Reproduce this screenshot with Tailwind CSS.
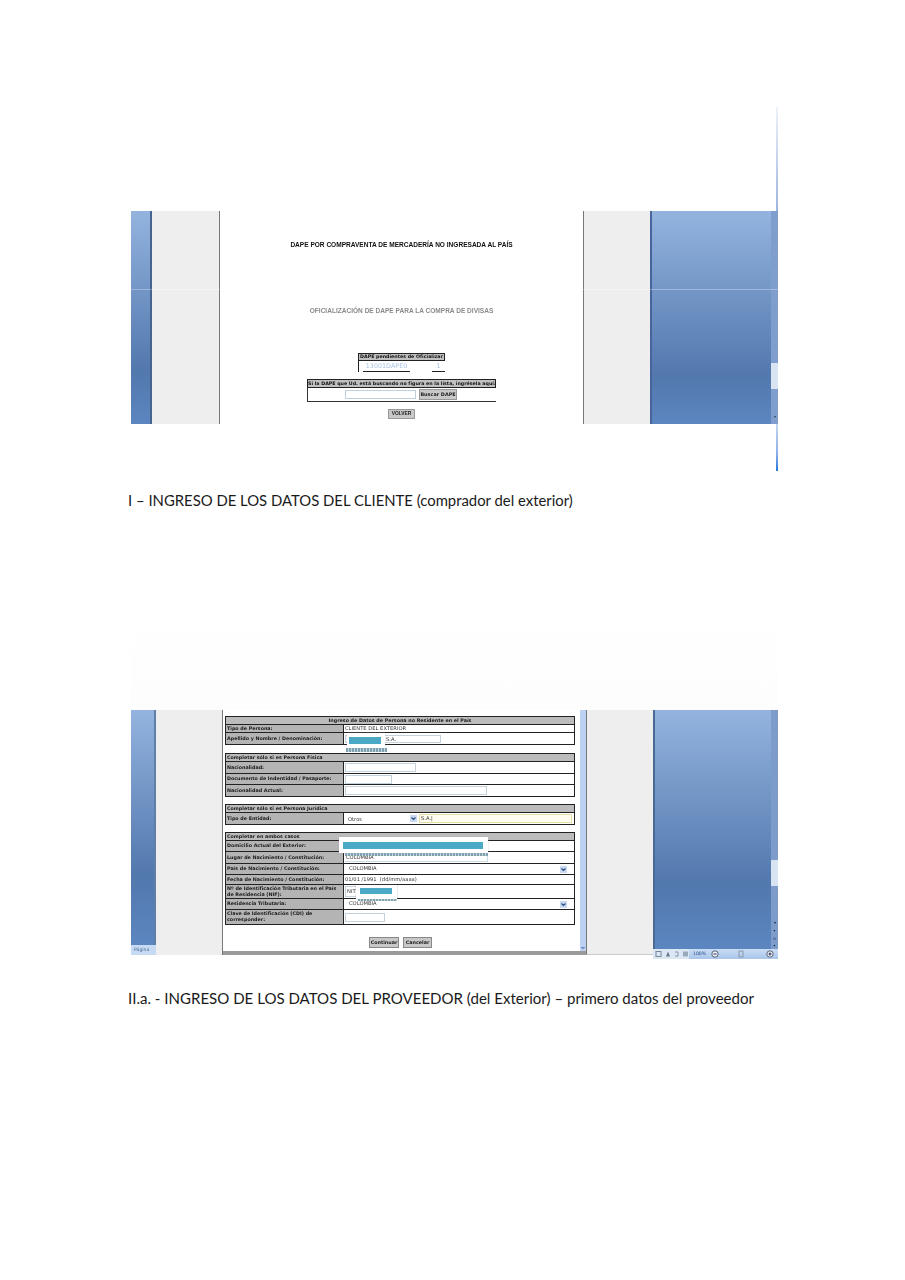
<!DOCTYPE html>
<html lang="es"><head><meta charset="utf-8"><title>DAPE</title>
<script src="https://cdn.jsdelivr.net/npm/@tailwindcss/browser@4"></script></head>
<body class="bg-white">
<main class="w-[905px] h-[1280px] overflow-hidden bg-white pt-[107px] font-['Lato',sans-serif]">

<!-- Screenshot 1 -->
<figure class="ml-[131px] w-[647px]">
  <div class="h-[104px] flex justify-end"><div class="w-[2px] bg-gradient-to-b from-[#eef2f9] to-[#9db4de]"></div></div>
  <div class="relative h-[213px] flex blur-[0.3px]">
    <div class="w-[21px] border-r-2 border-[#47648f] bg-gradient-to-b from-[#94b4df] via-[#5278ad] via-75% to-[#5c86c0]"></div>
    <div class="w-[68px] border-r border-[#777] bg-[#eeeeee]"></div>
    <div class="w-[364px] border-r border-[#777] bg-white flex flex-col items-center font-['Liberation_Sans',sans-serif]">
      <p class="mt-[30px] h-[8px] leading-[8px] text-[6.55px] font-bold text-[#111] whitespace-nowrap">DAPE POR COMPRAVENTA DE MERCADERÍA NO INGRESADA AL PAÍS</p>
      <p class="mt-[58px] h-[8px] leading-[8px] text-[6.55px] font-bold text-[#8a8a8a] whitespace-nowrap">OFICIALIZACIÓN DE DAPE PARA LA COMPRA DE DIVISAS</p>
      <div class="mt-[37.5px] w-[87px] font-['DejaVu_Sans',sans-serif]">
        <div class="h-[8.5px] border border-[#222] bg-[#c0c0c0] text-[4.75px] leading-[6.5px] font-bold text-center text-[#111] whitespace-nowrap">DAPE pendientes de Oficializar</div>
        <div class="h-[11px] flex justify-between border-l border-[#222] pl-[4px] text-[6.4px] leading-[10px] text-[#a9c3e2]">
          <span class="w-[47px] border-b border-[#222] text-center">13001DAPE0</span><span class="w-[13px] border-b border-[#222] text-center">1</span>
        </div>
      </div>
      <div class="mt-[7px] w-[189px] font-['DejaVu_Sans',sans-serif]">
        <div class="h-[9px] border border-[#222] bg-[#c0c0c0] text-[4.75px] leading-[7px] font-bold text-center text-[#111] whitespace-nowrap">Si la DAPE que Ud. está buscando no figura en la lista, ingrésela aquí:</div>
        <div class="h-[14px] border-l border-b border-[#333] flex items-center gap-[3px] pl-[37px]">
          <span class="w-[71px] h-[9px] border border-[#bcd0e0] bg-white"></span>
          <span class="w-[38px] h-[11px] border border-[#999] bg-[#c8c8c8] text-[4.9px] leading-[9px] font-bold text-center text-[#222] whitespace-nowrap">Buscar DAPE</span>
        </div>
      </div>
      <span class="mt-[7px] w-[27px] h-[10px] border border-[#999] bg-[#c8c8c8] text-[4.9px] leading-[8px] font-bold text-center text-[#222]">VOLVER</span>
    </div>
    <div class="w-[68px] bg-[#eeeeee] border-r-2 border-[#47649c]"></div>
    <div class="w-[119px] bg-gradient-to-b from-[#94b4df] via-[#5278ad] via-77% to-[#5c86c0]"></div>
    <div class="w-[7px] flex flex-col items-center bg-[#7f9ecd]">
      <div class="mt-[152px] w-full h-[26px] bg-[#d9e4f2]"></div>
      <span class="mt-[25px] text-[4px] leading-[6px] text-[#345]">▾</span>
    </div>
    <!-- horizontal seam of the scanned picture -->
    <div class="absolute left-0 right-0 top-[78px] h-px bg-white/30"></div>
  </div>
  <div class="h-[47px] flex justify-end"><div class="w-[2px] bg-gradient-to-b from-[#c4d5f0] via-[#8fb2ea] via-60% to-[#1c79d8]"></div></div>
</figure>

<figcaption class="ml-[128px] mt-[19px] h-[20px] leading-[20px] text-[14.87px] text-[#1a1a1a] whitespace-nowrap">I – INGRESO DE LOS DATOS DEL CLIENTE (comprador del exterior)</figcaption>

<!-- Screenshot 2 -->
<figure class="ml-[131px] mt-[94px] w-[647px]">
  <div class="h-[106px] bg-gradient-to-b from-white to-[#fdfdfd]"></div>
  <div class="h-[245px] flex blur-[0.3px]">
    <div class="w-[25px] flex flex-col">
      <div class="flex-1 border-r-2 border-[#5f7ea8] bg-gradient-to-b from-[#94b4df] via-[#5278ad] via-70% to-[#5c86c0]"></div>
      <div class="h-[10px] bg-[#c6daf3] text-[4.6px] leading-[10px] text-[#46688f] pl-[3px] font-['DejaVu_Sans',sans-serif]">Página</div>
    </div>
    <div class="w-[67px] border-r border-[#777] bg-[#eeeeee]"></div>
    <div class="w-[363px] relative bg-white flex flex-col border-b-[4px] border-[#9a9a9a]">
      <div class="relative ml-[2px] mt-[6px] w-[350px] text-[4.8px] font-bold text-[#1a1a1a] font-['DejaVu_Sans',sans-serif]">
        <!-- block 1 -->
        <div class="border border-[#222]">
          <div class="h-[8px] bg-[#bcbcbc] leading-[7px] text-center border-b border-[#222] whitespace-nowrap">Ingreso de Datos de Persona no Residente en el País</div>
          <div class="h-[8px] flex border-b border-[#222]"><span class="w-[118px] pl-[1px] bg-[#b4b4b4] border-r border-[#222] whitespace-nowrap flex items-center">Tipo de Persona:</span><span class="flex-1 pl-[1px] font-normal text-[#333] text-[5.2px] flex items-center">CLIENTE DEL EXTERIOR</span></div>
          <div class="h-[11px] flex"><span class="w-[118px] pl-[1px] bg-[#b4b4b4] border-r border-[#222] whitespace-nowrap flex items-center">Apellido y Nombre / Denominación:</span><span class="flex-1 flex items-center"><span class="ml-[1px] w-[96px] h-[8px] border border-[#c4d2dc] pl-[40px] leading-[6px] font-normal text-[5.2px] text-[#333]">S.A.</span></span></div>
        </div>
        <!-- block 2 -->
        <div class="mt-[8px] border border-[#222]">
          <div class="h-[8px] bg-[#bcbcbc] leading-[7px] pl-[1px] border-b border-[#222] whitespace-nowrap">Completar sólo si es Persona Física</div>
          <div class="h-[12px] flex border-b border-[#222]"><span class="w-[118px] pl-[1px] bg-[#b4b4b4] border-r border-[#222] flex items-center">Nacionalidad:</span><span class="flex-1 flex items-center"><span class="ml-[1px] w-[71px] h-[9px] border border-[#c4d2dc]"></span></span></div>
          <div class="h-[11px] flex border-b border-[#222]"><span class="w-[118px] pl-[1px] bg-[#b4b4b4] border-r border-[#222] whitespace-nowrap flex items-center">Documento de Indentidad / Pasaporte:</span><span class="flex-1 flex items-center"><span class="ml-[1px] w-[47px] h-[9px] border border-[#c4d2dc]"></span></span></div>
          <div class="h-[11px] flex"><span class="w-[118px] pl-[1px] bg-[#b4b4b4] border-r border-[#222] flex items-center">Nacionalidad Actual:</span><span class="flex-1 flex items-center"><span class="ml-[1px] w-[142px] h-[9px] border border-[#c4d2dc]"></span></span></div>
        </div>
        <!-- block 3 -->
        <div class="mt-[7px] border border-[#222]">
          <div class="h-[8px] bg-[#bcbcbc] leading-[7px] pl-[1px] border-b border-[#222] whitespace-nowrap">Completar sólo si es Persona Jurídica</div>
          <div class="h-[11px] flex"><span class="w-[118px] pl-[1px] bg-[#b4b4b4] border-r border-[#222] flex items-center">Tipo de Entidad:</span>
            <span class="flex-1 flex items-center pl-[3px] font-normal text-[5.2px] text-[#333] gap-[1px]">
              <span class="w-[70px] h-[8px] leading-[8px] pl-[1px] flex justify-between"><span>Otros</span><svg class="w-[7px] h-[7px] bg-[#c9d9ef]" viewBox="0 0 7 7"><path d="M1.5 2.5L3.5 4.5L5.5 2.5" fill="none" stroke="#2d4f86" stroke-width="1.2"/></svg></span>
              <span class="ml-[1px] w-[153px] h-[9px] border border-[#e6dfa8] bg-[#fffdf0] leading-[7px] pl-[1px]">S.A.|</span>
            </span>
          </div>
        </div>
        <!-- block 4 -->
        <div class="mt-[7px] border border-[#222]">
          <div class="h-[8px] bg-[#bcbcbc] leading-[7px] pl-[1px] border-b border-[#222] whitespace-nowrap">Completar en ambos casos</div>
          <div class="h-[11px] flex border-b border-[#222]"><span class="w-[118px] pl-[1px] bg-[#b4b4b4] border-r border-[#222] whitespace-nowrap flex items-center">Domicilio Actual del Exterior:</span><span class="flex-1"></span></div>
          <div class="h-[12px] flex border-b border-[#222]"><span class="w-[118px] pl-[1px] bg-[#b4b4b4] border-r border-[#222] whitespace-nowrap flex items-center">Lugar de Nacimiento / Constitución:</span><span class="flex-1 pl-[2px] font-normal text-[5.2px] text-[#333] flex items-center">COLOMBIA</span></div>
          <div class="h-[11px] flex border-b border-[#222]"><span class="w-[118px] pl-[1px] bg-[#b4b4b4] border-r border-[#222] whitespace-nowrap flex items-center">País de Nacimiento / Constitución:</span><span class="flex-1 flex items-center pl-[5px] pr-[7px] justify-between font-normal text-[5.2px] text-[#333]"><span>COLOMBIA</span><svg class="w-[7px] h-[7px] bg-[#c9d9ef]" viewBox="0 0 7 7"><path d="M1.5 2.5L3.5 4.5L5.5 2.5" fill="none" stroke="#2d4f86" stroke-width="1.2"/></svg></span></div>
          <div class="h-[10px] flex border-b border-[#222]"><span class="w-[118px] pl-[1px] bg-[#b4b4b4] border-r border-[#222] whitespace-nowrap flex items-center">Fecha de Nacimiento / Constitución:</span><span class="flex-1 pl-[1px] font-normal text-[5.2px] text-[#333] whitespace-nowrap flex items-center">01/01 /1991 &nbsp;(dd/mm/aaaa)</span></div>
          <div class="h-[14px] flex border-b border-[#222] leading-[6px]"><span class="w-[118px] pl-[1px] pt-[1px] bg-[#b4b4b4] border-r border-[#222]">Nº de Identificación Tributaria en el País de Residencia (NIF):</span><span class="flex-1 flex items-center"><span class="ml-[1px] w-[12px] h-[11px] border border-[#c4d2dc] pl-[1px] font-normal text-[5.2px] leading-[9px] text-[#333]">NIT</span></span></div>
          <div class="h-[11px] flex border-b border-[#222]"><span class="w-[118px] pl-[1px] bg-[#b4b4b4] border-r border-[#222] whitespace-nowrap flex items-center">Residencia Tributaria:</span><span class="flex-1 flex items-center pl-[5px] pr-[7px] justify-between font-normal text-[5.2px] text-[#333]"><span>COLOMBIA</span><svg class="w-[7px] h-[7px] bg-[#c9d9ef]" viewBox="0 0 7 7"><path d="M1.5 2.5L3.5 4.5L5.5 2.5" fill="none" stroke="#2d4f86" stroke-width="1.2"/></svg></span></div>
          <div class="h-[14px] flex leading-[6px]"><span class="w-[118px] pl-[1px] pt-[1px] bg-[#b4b4b4] border-r border-[#222]">Clave de Identificación (CDI) de corresponder:</span><span class="flex-1 flex items-center"><span class="ml-[1px] w-[40px] h-[9px] border border-[#c4d2dc]"></span></span></div>
        </div>
        <div class="mt-[12px] flex gap-[4px] pl-[144px]">
          <span class="w-[30px] h-[11px] border border-[#888] bg-[#c8c8c8] leading-[9px] text-center">Continuar</span>
          <span class="w-[29px] h-[11px] border border-[#888] bg-[#c8c8c8] leading-[9px] text-center">Cancelar</span>
        </div>
        <!-- redaction patches lying over the form -->
        <div class="absolute left-[122px] top-[17px] w-[38px] h-[15px] bg-white shadow-[0_0_1px_#aab] pt-[4px] pl-[2px]"><div class="w-[32px] h-[7px] bg-[#4ba9c6]"></div></div>
        <div class="absolute left-[121px] top-[32px] w-[41px] h-[4px] bg-[repeating-linear-gradient(90deg,#7fa0ae_0_2px,#c5d5dc_2px_3px)]"></div>
        <div class="absolute left-[114px] top-[121px] w-[149px] h-[16px] bg-white shadow-[0_0_1px_#aab] pt-[5px] pl-[4px]"><div class="w-[140px] h-[7px] bg-[#4ba9c6]"></div></div>
        <div class="absolute left-[120px] top-[137px] w-[143px] h-[3px] bg-[repeating-linear-gradient(90deg,#7fa0ae_0_2px,#c5d5dc_2px_3px)]"></div>
        <div class="absolute left-[120px] top-[140px] w-[143px] h-[6px] border-r border-b border-[#cddde8]"></div>
        <div class="absolute left-[131px] top-[169px] w-[41px] h-[14px] bg-white shadow-[0_0_1px_#889] pt-[3px] pl-[4px]"><div class="w-[32px] h-[6px] bg-[#4ba9c6]"></div></div>
        <div class="absolute left-[133px] top-[183px] w-[39px] h-[2px] bg-[repeating-linear-gradient(90deg,#7fa0ae_0_2px,#c5d5dc_2px_3px)]"></div>
      </div>
      <div class="absolute right-0 top-0 bottom-0 w-[6px] bg-[#bcd1f3] flex flex-col justify-end items-center"><svg class="w-[6px] h-[6px]" viewBox="0 0 6 6"><path d="M1.5 2L3 3.5L4.5 2" fill="none" stroke="#2d4f86"/></svg></div>
    </div>
    <div class="w-[67px] border-l border-[#777] bg-[#eeeeee] border-b border-b-[#ccc]"></div>
    <div class="flex-1 flex flex-col">
      <div class="flex-1 flex">
        <div class="w-[2px] bg-[#4a6a96]"></div>
        <div class="flex-1 bg-gradient-to-b from-[#94b4df] via-[#5278ad] via-72% to-[#5c86c0]"></div>
        <div class="w-[7px] bg-[#7e9ccb] flex flex-col items-center">
          <div class="mt-[150px] w-full h-[26px] bg-[#d9e4f2]"></div>
          <span class="mt-[33px] text-[4px] leading-[8px] text-[#123]">▾</span>
          <span class="text-[4px] leading-[8px] text-[#123]">•</span>
          <span class="text-[4px] leading-[8px] text-[#123]">○</span>
          <span class="text-[4px] leading-[6px] text-[#123]">•</span>
        </div>
      </div>
      <div class="h-[10px] flex items-center bg-gradient-to-b from-[#c9dcf4] to-[#a9c5ea] text-[#2b4f8a] font-['DejaVu_Sans',sans-serif] text-[4.6px]">
        <svg class="w-[36px] h-[10px]" viewBox="0 0 36 10"><rect width="36" height="10" fill="#dbe7f5"/><rect x="3" y="2.5" width="5" height="5" fill="none" stroke="#789"/><path d="M13 7.5l2-5 2 5z" fill="#678"/><path d="M22 3h3v4h-3" fill="none" stroke="#89a"/><rect x="30" y="2.5" width="5" height="5" fill="#9ab"/></svg>
        <span class="ml-[4px] w-[18px]">100%</span>
        <svg class="w-[8px] h-[8px]" viewBox="0 0 8 8"><circle cx="4" cy="4" r="3.2" fill="#eef" stroke="#567"/><path d="M2.5 4h3" stroke="#234"/></svg>
        <svg class="ml-[19px] w-[6px] h-[8px]" viewBox="0 0 6 8"><rect x="1" y="1" width="4" height="6" fill="none" stroke="#89a"/></svg>
        <svg class="ml-[22px] w-[8px] h-[8px]" viewBox="0 0 8 8"><circle cx="4" cy="4" r="3.2" fill="#eef" stroke="#567"/><path d="M2.5 4h3M4 2.5v3" stroke="#234"/></svg>
      </div>
    </div>
  </div>
</figure>

<figcaption class="ml-[128px] mt-[33px] h-[20px] leading-[20px] text-[15.05px] text-[#1a1a1a] whitespace-nowrap">II.a. - INGRESO DE LOS DATOS DEL PROVEEDOR (del Exterior) – primero datos del proveedor</figcaption>
</main>
</body></html>
